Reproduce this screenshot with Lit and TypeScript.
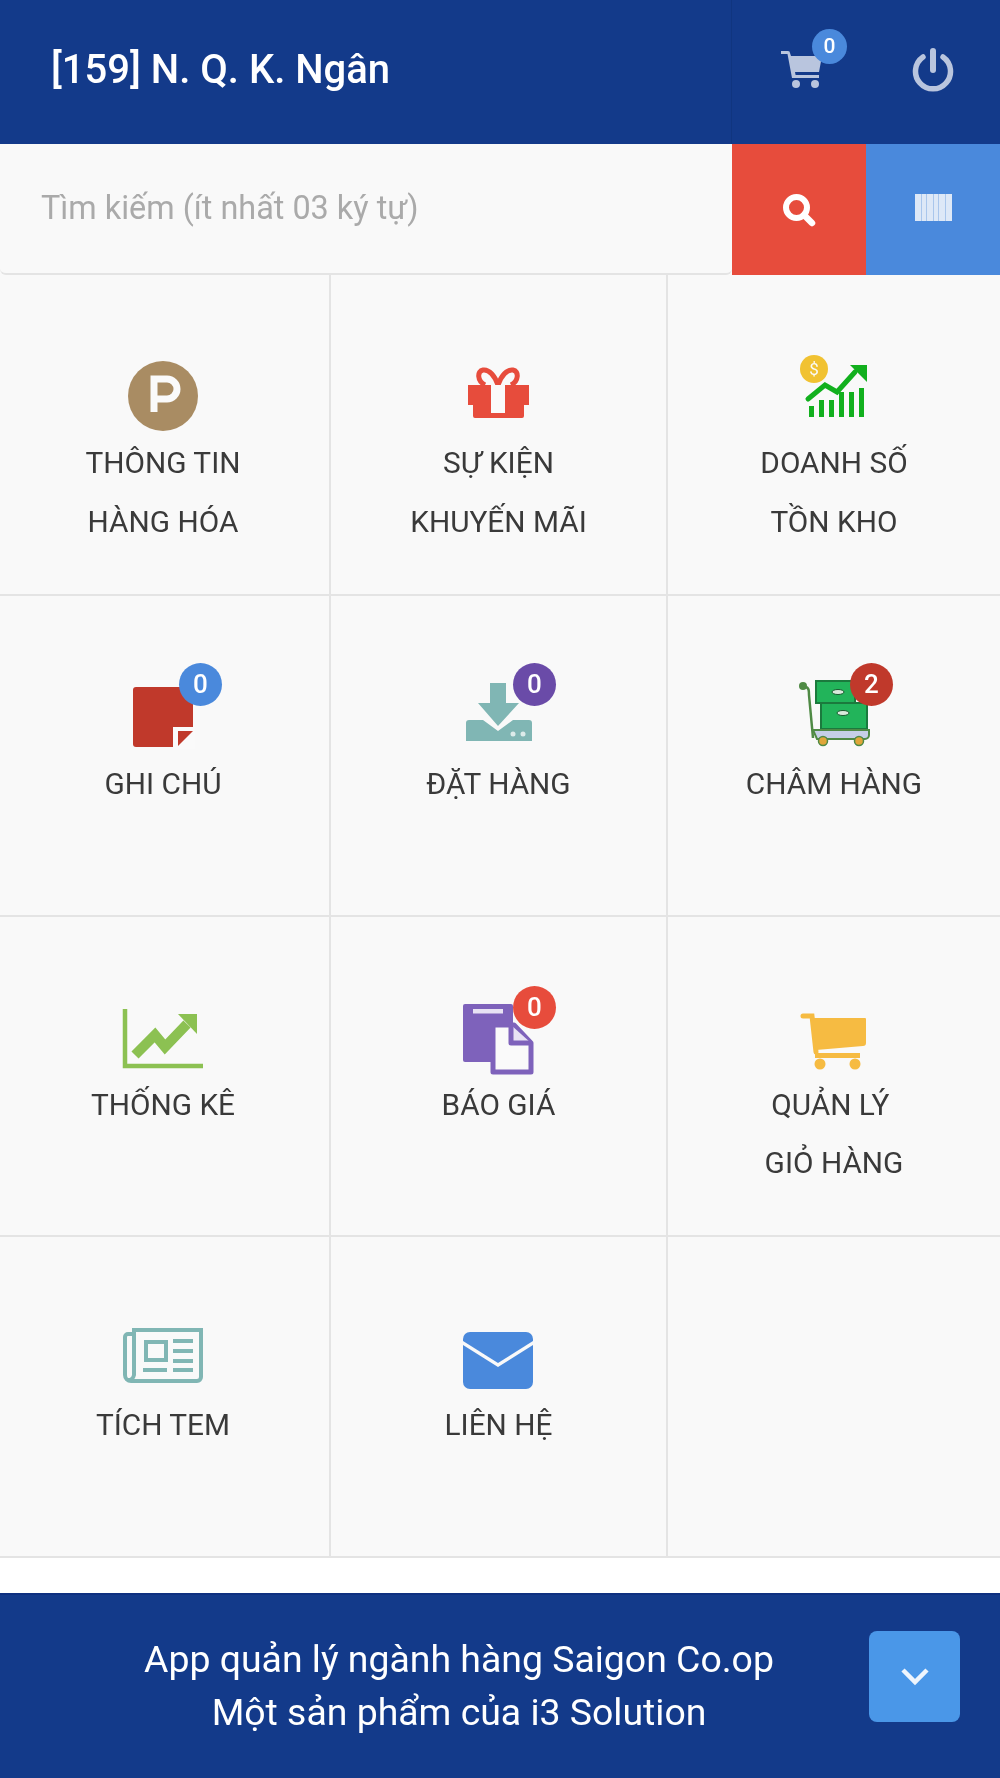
import { LitElement, html, css, svg } from "lit";
import { customElement } from "lit/decorators.js";

const icons: Record<string, any> = {
  p: svg`<circle cx="50" cy="36" r="35" fill="#a98c63"/><path d="M41 52V19h13a10 10 0 0 1 0 20H41" fill="none" stroke="#fafafa" stroke-width="7"/>`,
  gift: svg`<path d="M49 25c-3-9-9-16-15-15-6 1-6 11 2 15M49 25c3-9 9-16 15-15 6 1 6 11-2 15" fill="none" stroke="#e74c3c" stroke-width="5"/><path d="M19 25h61v20h-5v11a2 2 0 0 1-2 2H26a2 2 0 0 1-2-2V45h-5z" fill="#e74c3c"/><rect x="42" y="25" width="14" height="28" fill="#fafafa"/>`,
  sales: svg`<circle cx="30" cy="9" r="14" fill="#f1c232"/><text x="30" y="15" text-anchor="middle" font-family="Roboto" font-size="17" fill="#fafafa">$</text><path d="M24 39 41 25l12 7 18-20" fill="none" stroke="#12b01e" stroke-width="5" stroke-linecap="round"/><path d="M66 5h17v17z" fill="#12b01e"/><g fill="#12b01e"><rect x="25" y="46" width="5" height="11"/><rect x="35" y="40" width="5" height="17"/><rect x="45" y="40" width="5" height="17"/><rect x="55" y="32" width="5" height="25"/><rect x="65" y="32" width="5" height="25"/><rect x="75" y="28" width="5" height="29"/></g>`,
  note: svg`<rect x="20" y="6" width="60" height="60" rx="3" fill="#c0392b"/><rect x="60" y="46" width="22" height="22" fill="#fafafa"/><path d="M65 50h15L65 65z" fill="#c0392b"/>`,
  download: svg`<path d="M41 2h16v20h13L49 45 29 22h12z" fill="#80b6b4"/><path d="M20 39h14l15 11 15-11h16a3 3 0 0 1 3 3v18H17V42a3 3 0 0 1 3-3z" fill="#80b6b4"/><circle cx="64" cy="53" r="2.500" fill="#dcebea"/><circle cx="74" cy="53" r="2.500" fill="#dcebea"/>`,
  trolley: svg`<path d="M21 6c4 0 4 4 4 8l4 43" fill="none" stroke="#4f8a45" stroke-width="2.500"/><circle cx="19" cy="5" r="4" fill="#4f8a45"/><rect x="32" y="0" width="39" height="22" fill="#22b45a" stroke="#1b7a3d" stroke-width="2"/><rect x="37" y="22" width="46" height="26" fill="#22b45a" stroke="#1b7a3d" stroke-width="2"/><ellipse cx="54" cy="11" rx="6" ry="2.500" fill="#d9e9dc" stroke="#1b5a30"/><ellipse cx="59" cy="32" rx="6" ry="2.500" fill="#d9e9dc" stroke="#1b5a30"/><path d="M29 49h56v5a4 4 0 0 1-4 4H33z" fill="#c5cfe6" stroke="#4f8a45" stroke-width="2"/><circle cx="39" cy="60" r="4.500" fill="#e0a63a" stroke="#4f8a45" stroke-width="1.500"/><circle cx="75" cy="60" r="4.500" fill="#e0a63a" stroke="#4f8a45" stroke-width="1.500"/>`,
  chart: svg`<path d="M12 7v57h78" fill="none" stroke="#8cc152" stroke-width="4.500"/><path d="M22 53 42 33l10 12 22-23" fill="none" stroke="#8cc152" stroke-width="10"/><path d="M65 12h19v20z" fill="#8cc152"/>`,
  quote: svg`<rect x="14" y="2" width="50" height="58" rx="2" fill="#7e62bb"/><rect x="24" y="7" width="30" height="4.500" fill="#e8e2f4"/><path d="M44 23h21l17 18v29H44z" fill="#fafafa" stroke="#7e62bb" stroke-width="5" stroke-linejoin="round"/><path d="M62 23v18h20" fill="#e8e2f4" stroke="#7e62bb" stroke-width="5" stroke-linejoin="round"/>`,
  cart: svg`<path d="M19 14h9l4 36" fill="none" stroke="#f6bb42" stroke-width="5" stroke-linecap="round"/><path d="M29 16h52a1 1 0 0 1 1 1v24a3 3 0 0 1-3 3l-47 4z" fill="#f6bb42"/><rect x="31" y="51" width="45" height="5" fill="#f6bb42"/><circle cx="36" cy="62" r="5.500" fill="#f6bb42"/><circle cx="71" cy="62" r="5.500" fill="#f6bb42"/>`,
  news: svg`<g fill="none" stroke="#80b6b4"><path d="M21 12h-6a3 3 0 0 0-3 3v38a6 6 0 0 0 6 6h66a4 4 0 0 0 4-4V8H21v45a6 6 0 0 1-6 5" stroke-width="4"/><rect x="33" y="20" width="20" height="18" stroke-width="4"/></g><g fill="#80b6b4"><rect x="60" y="17" width="20" height="4"/><rect x="60" y="27" width="20" height="4"/><rect x="60" y="37" width="20" height="4"/><rect x="30" y="46" width="24" height="4"/><rect x="60" y="46" width="20" height="4"/></g>`,
  mail: svg`<path d="M21 10h56a7 7 0 0 1 7 7v2L49 41 14 19v-2a7 7 0 0 1 7-7z" fill="#4a89dc"/><path d="M14 23 49 45l35-22v37a7 7 0 0 1-7 7H21a7 7 0 0 1-7-7z" fill="#4a89dc"/>`,
};

interface Item { icon?: string; lines?: string[]; badge?: string; color?: string; cls?: string; }
const items: Item[] = [
  { icon: "p", lines: ["THÔNG TIN", "HÀNG HÓA"] },
  { icon: "gift", lines: ["SỰ KIỆN", "KHUYẾN MÃI"] },
  { icon: "sales", lines: ["DOANH SỐ", "TỒN KHO"] },
  { icon: "note", lines: ["GHI CHÚ"], badge: "0", color: "#4a89dc" },
  { icon: "download", lines: ["ĐẶT HÀNG"], badge: "0", color: "#6a4ba8", cls: "shift" },
  { icon: "trolley", lines: ["CHÂM HÀNG"], badge: "2", color: "#c0392b" },
  { icon: "chart", lines: ["THỐNG KÊ"] },
  { icon: "quote", lines: ["BÁO GIÁ"], badge: "0", color: "#e74c3c", cls: "shift low" },
  { icon: "cart", lines: ["QUẢN LÝ\u00a0", "GIỎ HÀNG"] },
  { icon: "news", lines: ["TÍCH TEM"] },
  { icon: "mail", lines: ["LIÊN HỆ"] },
  {},
];

@customElement("app-root")
export class AppRoot extends LitElement {
  static styles = css`
    :host { display: flex; flex-direction: column; height: 1778px; font-family: Roboto, "Liberation Sans", sans-serif; background: #fff; filter: blur(0.5px); }
    .head { display: flex; height: 144px; background: #133a8a; color: #fff; flex: none; }
    .title { width: 732px; box-sizing: border-box; padding-left: 51px; font-size: 40px; font-weight: 500; line-height: 140px; border-right: 1px solid #10357f; }
    .hbtn { flex: 1; position: relative; display: flex; align-items: center; justify-content: center; }
    .hbtn svg { display: block; }
    .cartbtn { flex: none; width: 134px; }
    .cartic { margin: 0 0 6px 6px; }
    .powic { margin-bottom: 4px; }
    .cartbadge { position: absolute; left: 80px; top: 29px; width: 35px; height: 35px; border-radius: 50%; background: #4a89dc; font-size: 21px; font-weight: 500; line-height: 35px; text-align: center; }
    .search { display: flex; height: 131px; flex: none; background: #f9f9f9; }
    .input { flex: 1; box-sizing: border-box; padding-left: 41px; font-size: 32.4px; color: #aaa; line-height: 128px; border-bottom: 2px solid #e4e4e4; border-radius: 0 0 6px 6px; }
    .sbtn { width: 134px; display: flex; align-items: center; justify-content: center; }
    .red { background: #e74c3c; }
    .blue { background: #4a89dc; }
    .bar { margin-bottom: 4px; }
    .grid { display: grid; grid-template-columns: 331px 337px 1fr; grid-auto-rows: 320.75px; background: #f9f9f9; flex: none; }
    .cell { box-sizing: border-box; border-right: 2px solid #e4e4e4; border-bottom: 2px solid #e4e4e4; padding-top: 85px; text-align: center; color: #3a3a3a; font-size: 29.8px; line-height: 58.5px; }
    .cell:nth-child(3n) { border-right: none; }
    .cell:nth-child(3n+1) { padding-right: 3px; }
    .ic { position: relative; width: 100px; height: 72px; margin: 0 auto 2px; }
    .ic svg { display: block; overflow: visible; }
    .badge { position: absolute; left: 66px; top: -18px; width: 43px; height: 43px; border-radius: 50%; color: #fff; font-size: 26px; font-weight: 500; line-height: 43px; text-align: center; }
    .badge.shift { left: 64.5px; }
    .badge.low { top: -15.5px; }
    .foot { margin-top: auto; height: 185px; box-sizing: border-box; background: #133a8a; border-top: 2px solid #0e3080; color: #fff; position: relative; display: flex; padding-right: 82px; align-items: center; justify-content: center; text-align: center; font-size: 37.4px; line-height: 53px; }
    .msg { padding-bottom: 2px; }
    .down { position: absolute; left: 869px; top: 36px; width: 91px; height: 91px; border-radius: 8px; background: #4a97e8; display: flex; align-items: center; justify-content: center; }
  `;

  render() {
    return html`
      <div class="head">
        <div class="title">[159] N. Q. K. Ngân</div>
        <div class="hbtn cartbtn">
          <svg class="cartic" width="42" height="38" viewBox="0 0 42 38"><g fill="#b9c5de"><path d="M0 1h7a2 2 0 0 1 2 2l1 3h31l-3 16H14l.6 3H38v3H11L6.500 4H0z"/><circle cx="15" cy="34" r="4"/><circle cx="34" cy="34" r="4"/></g></svg>
          <div class="cartbadge">0</div>
        </div>
        <div class="hbtn">
          <svg class="powic" width="42" height="44" viewBox="0 0 42 44"><path d="M11 9A17.500 17.500 0 1 0 31 9" fill="none" stroke="#b9c5de" stroke-width="5.500" stroke-linecap="round"/><path d="M21 3v19" stroke="#b9c5de" stroke-width="6" stroke-linecap="round"/></svg>
        </div>
      </div>
      <div class="search">
        <div class="input">Tìm kiếm (ít nhất 03 ký tự)</div>
        <div class="sbtn red"><svg width="34" height="34" viewBox="0 0 34 34"><circle cx="14.500" cy="14.500" r="10.500" fill="none" stroke="#fff" stroke-width="6"/><path d="M22 22l8 8" stroke="#fff" stroke-width="6.500" stroke-linecap="round"/></svg></div>
        <div class="sbtn blue"><svg class="bar" width="37" height="27" viewBox="0 0 37 27"><rect width="37" height="27" fill="#dde8f7"/><g fill="#a9c6ec"><rect x="6" width="1" height="27"/><rect x="11" width="1" height="27"/><rect x="18" width="1" height="27"/><rect x="23" width="1" height="27"/><rect x="30" width="1" height="27"/></g></svg></div>
      </div>
      <div class="grid">
        ${items.map((it) => html`
          <div class="cell">
            ${it.icon ? html`
              <div class="ic">
                <svg width="100" height="72" viewBox="0 0 100 72">${icons[it.icon]}</svg>
                ${it.badge ? html`<div class="badge ${it.cls ?? ""}" style="background:${it.color}">${it.badge}</div>` : ""}
              </div>
              ${it.lines!.map((l) => html`<div>${l}</div>`)}
            ` : ""}
          </div>`)}
      </div>
      <div class="foot">
        <div class="msg">App quản lý ngành hàng Saigon Co.op<br />Một sản phẩm của i3 Solution</div>
        <div class="down"><svg width="30" height="20" viewBox="0 0 30 20"><path d="M3 3l12 12L27 3" fill="none" stroke="#eef5fd" stroke-width="4.500"/></svg></div>
      </div>
    `;
  }
}
